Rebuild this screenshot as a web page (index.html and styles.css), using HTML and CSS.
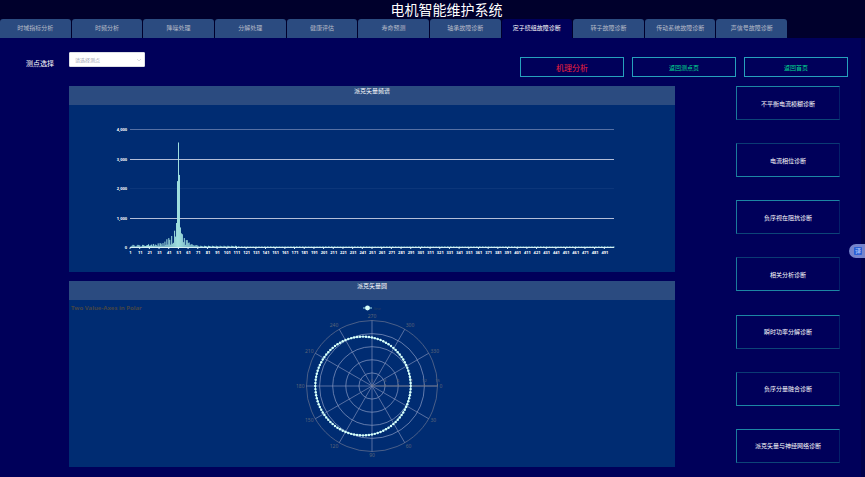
FILE: index.html
```html
<!DOCTYPE html>
<html lang="zh-CN">
<head>
    <meta charset="UTF-8">
    <meta name="viewport" content="width=device-width, initial-scale=1.0">
    <title>电机智能维护系统</title>
    <link rel="stylesheet" href="styles.css">
</head>
<body>
    <header class="header">
        <h1>电机智能维护系统</h1>
        <nav class="tabs">
            <a href="#">时域指标分析</a>
            <a href="#">时频分析</a>
            <a href="#">降噪处理</a>
            <a href="#">分解处理</a>
            <a href="#">健康评估</a>
            <a href="#">寿命预测</a>
            <a href="#">轴承故障诊断</a>
            <a href="#" class="active">定子绕组故障诊断</a>
            <a href="#">转子故障诊断</a>
            <a href="#">传动系统故障诊断</a>
            <a href="#">声信号故障诊断</a>
        </nav>
    </header>

    <div class="toolbar">
        <label for="point">测点选择</label>
        <div class="select-box">
            <select id="point">
                <option>请选择测点</option>
            </select>
            <svg class="arrow" viewBox="0 0 6 4"><path d="M1 1 L3 3 L5 1"/></svg>
        </div>
        <div class="actions">
            <button class="action-btn red">机理分析</button>
            <button class="action-btn">返回测点页</button>
            <button class="action-btn">返回首页</button>
        </div>
    </div>

    <main class="container">
        <div class="charts">
            <section class="panel">
                <h2>派克矢量频谱</h2>
                <svg id="spectrum" viewBox="0 0 606 167"></svg>
            </section>
            <section class="panel">
                <h2>派克矢量圆</h2>
                <svg id="polar" viewBox="0 0 606 167"></svg>
            </section>
        </div>

        <div class="side">
            <button>不平衡电流模糊诊断</button>
            <button>电流相位诊断</button>
            <button>负序视在阻抗诊断</button>
            <button>相关分析诊断</button>
            <button>瞬时功率分解诊断</button>
            <button>负序分量融合诊断</button>
            <button>派克矢量与神经网络诊断</button>
        </div>
    </main>

    <button class="translate-btn"><span>译</span></button>

    <script src="script.js"></script>
</body>
</html>
```

FILE: styles.css
```css
* {
    box-sizing: border-box;
}

body {
    margin: 0;
    min-height: 100vh;
    font-family: "Noto Sans", "Noto Sans CJK SC", sans-serif;
    font-size: 6px;
    color: #fff;
    background: linear-gradient(to left, #00004a 4px, #00005a 4px);
}

button, select {
    font-family: inherit;
    font-size: inherit;
    cursor: pointer;
}

.header {
    background: #00002c;
}

.header h1 {
    margin: 0;
    padding-left: 28px;
    font-size: 14px;
    font-weight: normal;
    line-height: 19px;
    text-align: center;
}

.tabs {
    display: grid;
    grid-template-columns: repeat(11, 1fr);
    gap: 1px;
    width: 91%;
}

.tabs a {
    height: 19px;
    line-height: 19px;
    text-align: center;
    text-decoration: none;
    white-space: nowrap;
    color: #b8bcc8;
    background: #2b4b80;
    border-radius: 3px 3px 0 0;
}

.tabs a.active {
    color: #fff;
    background: #00005a;
}

.toolbar {
    display: flex;
    padding: 14px 17px 9px 26px;
    min-height: 48px;
}

.toolbar label {
    width: 43px;
    font-size: 7px;
    line-height: 24px;
}

.select-box {
    position: relative;
    width: 76px;
    height: 15px;
}

.select-box select {
    appearance: none;
    width: 100%;
    height: 15px;
    padding: 0 5px;
    font-size: 5px;
    color: #a0a4b4;
    background: #fff;
    border: 1px solid #dcdfe6;
    border-radius: 1px;
}

.arrow {
    position: absolute;
    top: 6px;
    right: 3px;
    width: 6px;
    height: 4px;
    fill: none;
    stroke: #c0c4cc;
    stroke-width: 0.6;
}

.actions {
    display: flex;
    gap: 8px;
    margin-left: auto;
    align-self: flex-end;
}

.action-btn {
    width: 104px;
    height: 20px;
    padding: 0;
    color: #00dc90;
    background: transparent;
    border: 1px solid #26a0bc;
}

.action-btn.red {
    font-size: 8px;
    color: #f0203c;
}

.container {
    display: flex;
    gap: 61px;
    padding: 0 25px 10px 69px;
}

.charts {
    flex: 1;
    display: flex;
    flex-direction: column;
    gap: 9px;
}

.panel {
    background: #002c72;
}

.panel h2 {
    margin: 0;
    height: 19px;
    font-size: 6px;
    font-weight: normal;
    line-height: 10px;
    text-align: center;
    background: #2b4b80;
}

.panel svg {
    display: block;
    width: 100%;
}

.side {
    display: flex;
    flex-direction: column;
    justify-content: space-between;
    width: 104px;
    padding-bottom: 4px;
}

.side button {
    height: 34px;
    padding: 0;
    color: #fff;
    background: transparent;
    border: 1px solid;
    border-color: #1c86a4 #04206a #0c4478 #1a7a9c;
}

.side button:nth-child(even) {
    border-color: #0a3a74 #04206a #1c86a4 #1a7a9c;
}

.translate-btn {
    position: fixed;
    top: 244px;
    right: 0;
    width: 16px;
    height: 14px;
    padding: 0 0 0 2px;
    border: none;
    border-radius: 7px 0 0 7px;
    background: #7684cc;
}

.translate-btn span {
    display: block;
    width: 8px;
    margin: 0 auto;
    line-height: 8px;
    color: #b8ccff;
    background: #2a5fd4;
    border-radius: 1px;
}

/* charts */
.grid-line.strong {
    stroke: #b4bed8;
}

.grid-line.weak {
    stroke: #0c367a;
}

.grid-line.soft {
    stroke: #5670a4;
}

.axis-line {
    stroke: #d8f0f4;
}

.axis-text {
    font-size: 4px;
    font-weight: bold;
    fill: #fff;
}

.bar {
    fill: #a8e8e4;
}

.chart-title {
    font-size: 6px;
    font-weight: bold;
    fill: #464646;
}

.ring {
    fill: none;
    stroke: #8c9cc4;
    stroke-width: 0.7;
}

.ring.outer {
    stroke: #6a7490;
}

.spoke {
    stroke: #7c8cb8;
    stroke-width: 0.7;
}

.radius-axis {
    stroke: #6a7080;
    stroke-width: 0.8;
}

.polar-text {
    font-size: 5px;
    fill: #5c6478;
}

.radius-text {
    font-size: 4px;
    fill: #5c6478;
}

.legend-text {
    font-size: 4px;
    fill: #2c3c5c;
}

.curve {
    fill: none;
    stroke: #a0e0e8;
}

.dot {
    fill: #d8fffa;
}
```

FILE: script.js
```javascript
const SVG_NS = "http://www.w3.org/2000/svg";

function add(parent, tag, attrs, text) {
    const el = document.createElementNS(SVG_NS, tag);
    for (const key in attrs) {
        el.setAttribute(key, attrs[key]);
    }
    if (text !== undefined) el.textContent = text;
    parent.appendChild(el);
    return el;
}

function drawSpectrum() {
    const svg = document.getElementById("spectrum");
    const left = 61, right = 545, bottom = 142.5, unit = 29.5;
    const count = 500;
    const step = (right - left) / count;

    // first 70 bins, the rest is low noise
    const values = [
        40, 60, 90, 80, 50, 30, 60, 90, 80, 70,
        30, 40, 90, 80, 60, 50, 70, 80, 110, 60,
        70, 100, 60, 120, 60, 100, 80, 60, 140, 60,
        150, 130, 60, 150, 60, 200, 90, 280, 100, 320,
        260, 100, 390, 130, 160, 570, 370, 830, 2250, 3560,
        2460, 680, 480, 450, 180, 320, 90, 250, 250, 150,
        170, 80, 110, 110, 80, 70, 60, 80, 80, 60
    ];
    for (let i = values.length; i < count; i++) {
        values.push(i < 110 ? 60 - (i % 4) * 10 : 38 - (i % 3) * 7);
    }

    const lines = { 1: "strong", 2: "weak", 3: "strong", 4: "soft" };
    for (let k = 0; k <= 4; k++) {
        const y = bottom - k * unit;
        if (k > 0) {
            const py = Math.floor(y) + 0.5;
            add(svg, "line", { x1: left, x2: right, y1: py, y2: py, class: "grid-line " + lines[k] });
        }
        add(svg, "text", { x: left - 3, y: y + 1.5, "text-anchor": "end", class: "axis-text" }, (k * 1000).toLocaleString("en-US"));
    }

    values.forEach((v, i) => {
        const h = v / 1000 * unit;
        add(svg, "rect", { x: left + (i + 0.6) * step, y: bottom - h, width: 0.95, height: h, class: "bar" });
    });

    add(svg, "line", { x1: left, x2: right, y1: bottom, y2: bottom, class: "axis-line" });
    for (let i = 0; i < count; i += 10) {
        const x = left + i * step;
        add(svg, "line", { x1: x, x2: x, y1: bottom, y2: bottom + 1.5, class: "axis-line" });
        add(svg, "text", { x: x + 0.5, y: bottom + 6, "text-anchor": "middle", class: "axis-text" }, i + 1);
    }
}

function drawPolar() {
    const svg = document.getElementById("polar");
    const cx = 303, cy = 86, radius = 65.5;

    add(svg, "text", { x: 2, y: 10, class: "chart-title" }, "Two Value-Axes in Polar");

    add(svg, "line", { x1: 294, x2: 303, y1: 8, y2: 8, class: "curve" });
    add(svg, "circle", { cx: 298.5, cy: 8, r: 2.4, class: "dot" });
    add(svg, "text", { x: 305, y: 9.5, class: "legend-text" }, "line");

    for (let i = 1; i <= 5; i++) {
        add(svg, "circle", { cx: cx, cy: cy, r: radius * i / 5, class: i === 5 ? "ring outer" : "ring" });
    }

    for (let deg = 0; deg < 360; deg += 30) {
        const a = deg * Math.PI / 180;
        const c = Math.cos(a), s = Math.sin(a);
        add(svg, "line", { x1: cx, y1: cy, x2: cx + radius * c, y2: cy + radius * s, class: "spoke" });
        add(svg, "text", {
            x: cx + (radius + 2) * c,
            y: cy + (radius + 4) * s + 1.5,
            "text-anchor": c > 0.1 ? "start" : c < -0.1 ? "end" : "middle",
            class: "polar-text"
        }, deg);
    }

    add(svg, "line", { x1: cx, x2: cx + radius, y1: cy, y2: cy, class: "radius-axis" });
    [0, 3, 6, 9, 12, 15].forEach((v, i) => {
        const x = cx + radius * i / 5;
        add(svg, "line", { x1: x, x2: x, y1: cy - 2, y2: cy, class: "radius-axis" });
        add(svg, "text", { x: x, y: cy - 4, "text-anchor": "middle", class: "radius-text" }, v);
    });

    const ox = 294, rx = 47.7, ry = 49.4;
    add(svg, "ellipse", { cx: ox, cy: cy, rx: rx, ry: ry, class: "curve" });
    for (let i = 0; i < 100; i++) {
        const a = i * Math.PI / 50;
        add(svg, "circle", { cx: ox + rx * Math.cos(a), cy: cy + ry * Math.sin(a), r: 1.2, class: "dot" });
    }
}

drawSpectrum();
drawPolar();
```
